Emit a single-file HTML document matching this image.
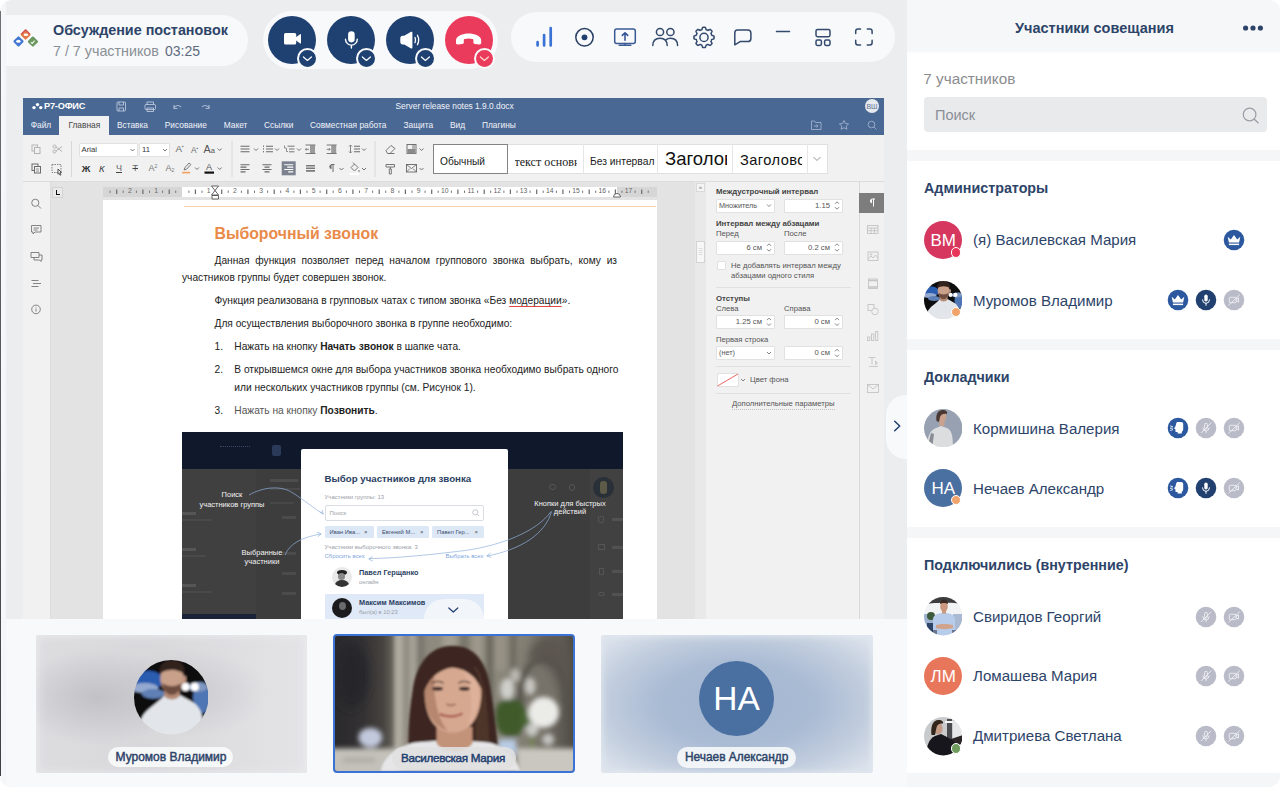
<!DOCTYPE html>
<html lang="ru">
<head>
<meta charset="utf-8">
<title>Обсуждение постановок</title>
<style>
*{box-sizing:border-box;margin:0;padding:0}
html,body{width:1280px;height:787px;overflow:hidden;background:#fff}
body{font-family:"Liberation Sans",sans-serif;color:#2d4469;position:relative}
#app{position:absolute;left:0;top:0;width:1280px;height:787px;background:#ebedef;border-radius:12px;overflow:hidden}
.abs{position:absolute}
.t{position:absolute;white-space:nowrap;line-height:1}
/* top pills */
.pill{position:absolute;background:#f8f9fa}
#p1{left:0;top:15px;width:248px;height:51px;border-radius:0 26px 26px 0}
#p2{left:263px;top:11px;width:235px;height:58px;border-radius:29px}
#p3{left:511px;top:12px;width:384px;height:50px;border-radius:25px}
.cb{position:absolute;width:48px;height:48px;border-radius:50%;background:#1f4172;top:16px}
.cbs{position:absolute;width:21px;height:21px;border-radius:50%;background:#1f4172;border:2px solid #f8f9fa;top:48px}
.red{background:#ea3b5c}
/* right panel */
#rp{left:907px;top:0;width:373px;height:787px;background:#f5f6f7}
#rph{left:0;top:0;width:374px;height:54px;background:linear-gradient(#f6f7f8 0,#f6f7f8 51px,#fff 54px)}
.sec{position:absolute;left:0;width:374px;background:#fff}
.sh{font-weight:bold;font-size:14.3px;color:#2d4469;left:17px}
.nm{font-size:15.1px;color:#2d4469;left:66px}
.av{position:absolute;left:17px;width:38px;height:38px;border-radius:50%;overflow:hidden}
.ic{position:absolute;width:22px;height:22px;border-radius:50%}
</style>
</head>
<body>
<div id="app">

<!-- TOPBAR -->
<div class="pill" id="p1"></div>
<div class="t" style="left:53px;top:23px;font-size:14.35px;font-weight:bold;color:#2d4469">Обсуждение постановок</div>
<div class="t" style="left:53px;top:44px;font-size:14.3px;color:#8a8f96">7 / 7 участников</div>
<div class="t" style="left:165px;top:44px;font-size:14px;color:#5d6b80">03:25</div>

<div class="pill" id="p2"></div>
<div class="cb" style="left:268px"></div><div class="cbs" style="left:297px"></div>
<div class="cb" style="left:327px"></div><div class="cbs" style="left:356px"></div>
<div class="cb" style="left:386px"></div><div class="cbs" style="left:415px"></div>
<div class="cb red" style="left:445px"></div><div class="cbs red" style="left:474px"></div>

<div class="pill" id="p3"></div>
<svg class="abs" style="left:0;top:0" width="907" height="80" viewBox="0 0 907 80" fill="none">
 <!-- logo -->
 <g>
  <rect x="-3.900" y="-3.900" width="7.800" height="7.800" rx="1.100" transform="translate(25.600 34.500) rotate(45)" fill="#e27a44"/>
  <path d="M25.600 29l4.600 4.600-1 1-3.600-3.600-3.600 3.600-1-1z" fill="#cf4a5a" opacity=".75"/>
  <rect x="-3.900" y="-3.900" width="7.800" height="7.800" rx="1.100" transform="translate(18.500 41.400) rotate(45)" fill="#4278d2"/>
  <rect x="-3.900" y="-3.900" width="7.800" height="7.800" rx="1.100" transform="translate(32.900 41.600) rotate(45)" fill="#6b9860"/>
  <ellipse cx="25.900" cy="34.700" rx="2.300" ry="1.300" fill="#fff"/>
  <ellipse cx="18.400" cy="41.300" rx="2.200" ry="1.500" fill="#fff"/>
  <path d="M31 42.200l1.300 1.200 2.300-2.800" stroke="#eef3ea" stroke-width="1.200" fill="none"/>
 </g>
 <!-- camera -->
 <rect x="284" y="33" width="12.2" height="11.6" rx="1.6" fill="#fff"/>
 <path d="M295.5 37.6l4.6-3.4c.5-.3.9 0 .9.500v8.200c0 .5-.4.800-.9.500l-4.600-3.400z" fill="#fff"/>
 <!-- mic -->
 <rect x="348.100" y="31.200" width="6.600" height="11.200" rx="3.300" fill="#fff"/>
 <path d="M345.500 39.200a5.900 5.900 0 0 0 11.800 0M351.400 45.100v3" stroke="#fff" stroke-width="1.400" stroke-linecap="round"/>
 <!-- speaker -->
 <path d="M400.300 38.200c0-1.500 1-2.400 2.300-2.400h1.600l6.900-4c.8-.4 1.300 0 1.300.800v15c0 .8-.5 1.200-1.300.800l-6.900-4h-1.600c-1.300 0-2.300-.9-2.300-2.400z" fill="#fff"/>
 <path d="M415 37.500c.7 1.600.7 3.600 0 5.200M417.400 35.300c1.600 3 1.600 6.500 0 9.500" stroke="#fff" stroke-width="1.300" stroke-linecap="round"/>
 <!-- hangup -->
 <path d="M456 40.200c0-1.700 1.500-3.600 4.200-4.900 2.500-1.200 5.400-1.800 8.400-1.800s5.900.6 8.400 1.800c2.700 1.300 4.200 3.200 4.200 4.900v2.600c0 1.200-.7 1.800-1.800 1.700l-4.500-.5c-1-.1-1.500-.7-1.500-1.700v-2.100c0-.6-.3-1-.9-1.100-1.200-.3-2.500-.5-3.900-.5s-2.700.2-3.900.5c-.6.100-.9.500-.9 1.100v2.100c0 1-.5 1.600-1.500 1.700l-4.500.5c-1.100.1-1.800-.5-1.800-1.700z" fill="#fff"/>
 <!-- chevrons -->
 <g stroke="#fff" stroke-width="1.200" stroke-linecap="round" stroke-linejoin="round">
  <path d="M303.400 57l4 3.500 4-3.500"/><path d="M362.400 57l4 3.500 4-3.500"/><path d="M421.400 57l4 3.500 4-3.500"/><path d="M480.400 57l4 3.500 4-3.500" stroke="#ffd9c9"/>
 </g>
 <!-- signal -->
 <g stroke="#3b72d6" stroke-width="2.700" stroke-linecap="round">
  <path d="M537.600 42.200v3.200M544.100 35.200v10.200M550.700 28.200v17.200"/>
 </g>
 <!-- record -->
 <circle cx="584.500" cy="37.300" r="8.700" stroke="#2a3f66" stroke-width="1.500"/>
 <circle cx="584.500" cy="37.300" r="2.900" fill="#21406f"/>
 <!-- screen share -->
 <rect x="614.700" y="29" width="20.600" height="14.400" rx="2" stroke="#3a5a96" stroke-width="1.500"/>
 <path d="M619.200 45.300h11.600M625 43.400v1.900" stroke="#3a5a96" stroke-width="1.400" stroke-linecap="round"/>
 <path d="M625 40.200v-7.200M622.300 35.400l2.700-2.700 2.700 2.700" stroke="#2d4f94" stroke-width="1.500" stroke-linecap="round" stroke-linejoin="round"/>
 <!-- people -->
 <g stroke="#33496e" stroke-width="1.500" stroke-linecap="round">
  <circle cx="660" cy="32" r="3.600"/><circle cx="670.400" cy="32" r="3.600"/>
  <path d="M652.800 45.600c0-4.800 3-7.400 7.200-7.400s7.200 2.600 7.200 7.400"/>
  <path d="M666.200 39.600c1.100-.9 2.600-1.400 4.200-1.400 4.200 0 7.200 2.600 7.200 7.400"/>
 </g>
 <!-- gear -->
 <g stroke="#33496e" stroke-width="1.500" stroke-linejoin="round">
  <circle cx="704" cy="37.400" r="4.100"/>
  <path d="M704.00 27.30 L704.26 27.30 L704.53 27.31 L704.79 27.33 L705.06 27.36 L705.32 27.39 L705.52 27.82 L705.69 28.29 L705.84 28.76 L705.96 29.23 L706.07 29.67 L706.27 29.73 L706.47 29.79 L706.67 29.86 L706.87 29.93 L707.06 30.01 L707.25 30.09 L707.44 30.18 L707.63 30.27 L707.82 30.37 L708.00 30.47 L708.39 30.24 L708.81 29.99 L709.25 29.76 L709.70 29.55 L710.15 29.39 L710.36 29.55 L710.56 29.72 L710.76 29.89 L710.95 30.07 L711.14 30.26 L711.33 30.45 L711.51 30.64 L711.68 30.84 L711.85 31.04 L712.01 31.25 L711.85 31.70 L711.64 32.15 L711.41 32.59 L711.16 33.01 L710.93 33.40 L711.03 33.58 L711.13 33.77 L711.22 33.96 L711.31 34.15 L711.39 34.34 L711.47 34.53 L711.54 34.73 L711.61 34.93 L711.67 35.13 L711.73 35.33 L712.17 35.44 L712.64 35.56 L713.11 35.71 L713.58 35.88 L714.01 36.08 L714.04 36.34 L714.07 36.61 L714.09 36.87 L714.10 37.14 L714.10 37.40 L714.10 37.66 L714.09 37.93 L714.07 38.19 L714.04 38.46 L714.01 38.72 L713.58 38.92 L713.11 39.09 L712.64 39.24 L712.17 39.36 L711.73 39.47 L711.67 39.67 L711.61 39.87 L711.54 40.07 L711.47 40.27 L711.39 40.46 L711.31 40.65 L711.22 40.84 L711.13 41.03 L711.03 41.22 L710.93 41.40 L711.16 41.79 L711.41 42.21 L711.64 42.65 L711.85 43.10 L712.01 43.55 L711.85 43.76 L711.68 43.96 L711.51 44.16 L711.33 44.35 L711.14 44.54 L710.95 44.73 L710.76 44.91 L710.56 45.08 L710.36 45.25 L710.15 45.41 L709.70 45.25 L709.25 45.04 L708.81 44.81 L708.39 44.56 L708.00 44.33 L707.82 44.43 L707.63 44.53 L707.44 44.62 L707.25 44.71 L707.06 44.79 L706.87 44.87 L706.67 44.94 L706.47 45.01 L706.27 45.07 L706.07 45.13 L705.96 45.57 L705.84 46.04 L705.69 46.51 L705.52 46.98 L705.32 47.41 L705.06 47.44 L704.79 47.47 L704.53 47.49 L704.26 47.50 L704.00 47.50 L703.74 47.50 L703.47 47.49 L703.21 47.47 L702.94 47.44 L702.68 47.41 L702.48 46.98 L702.31 46.51 L702.16 46.04 L702.04 45.57 L701.93 45.13 L701.73 45.07 L701.53 45.01 L701.33 44.94 L701.13 44.87 L700.94 44.79 L700.75 44.71 L700.56 44.62 L700.37 44.53 L700.18 44.43 L700.00 44.33 L699.61 44.56 L699.19 44.81 L698.75 45.04 L698.30 45.25 L697.85 45.41 L697.64 45.25 L697.44 45.08 L697.24 44.91 L697.05 44.73 L696.86 44.54 L696.67 44.35 L696.49 44.16 L696.32 43.96 L696.15 43.76 L695.99 43.55 L696.15 43.10 L696.36 42.65 L696.59 42.21 L696.84 41.79 L697.07 41.40 L696.97 41.22 L696.87 41.03 L696.78 40.84 L696.69 40.65 L696.61 40.46 L696.53 40.27 L696.46 40.07 L696.39 39.87 L696.33 39.67 L696.27 39.47 L695.83 39.36 L695.36 39.24 L694.89 39.09 L694.42 38.92 L693.99 38.72 L693.96 38.46 L693.93 38.19 L693.91 37.93 L693.90 37.66 L693.90 37.40 L693.90 37.14 L693.91 36.87 L693.93 36.61 L693.96 36.34 L693.99 36.08 L694.42 35.88 L694.89 35.71 L695.36 35.56 L695.83 35.44 L696.27 35.33 L696.33 35.13 L696.39 34.93 L696.46 34.73 L696.53 34.53 L696.61 34.34 L696.69 34.15 L696.78 33.96 L696.87 33.77 L696.97 33.58 L697.07 33.40 L696.84 33.01 L696.59 32.59 L696.36 32.15 L696.15 31.70 L695.99 31.25 L696.15 31.04 L696.32 30.84 L696.49 30.64 L696.67 30.45 L696.86 30.26 L697.05 30.07 L697.24 29.89 L697.44 29.72 L697.64 29.55 L697.85 29.39 L698.30 29.55 L698.75 29.76 L699.19 29.99 L699.61 30.24 L700.00 30.47 L700.18 30.37 L700.37 30.27 L700.56 30.18 L700.75 30.09 L700.94 30.01 L701.13 29.93 L701.33 29.86 L701.53 29.79 L701.73 29.73 L701.93 29.67 L702.04 29.23 L702.16 28.76 L702.31 28.29 L702.48 27.82 L702.68 27.39 L702.94 27.36 L703.21 27.33 L703.47 27.31 L703.74 27.30Z"/>
 </g>
 <!-- chat -->
 <path d="M737.300 29.900h10.400c2 0 3.200 1.200 3.200 3.200v5.300c0 2-1.200 3.200-3.200 3.200h-7.600l-5.300 3.200v-11.700c0-2 1-3.200 2.500-3.200z" stroke="#33496e" stroke-width="1.500" stroke-linejoin="round"/>
 <!-- minus -->
 <path d="M776.500 31.600h13" stroke="#33496e" stroke-width="1.500" stroke-linecap="round"/>
 <!-- grid -->
 <g stroke="#33496e" stroke-width="1.500">
  <rect x="816" y="29.400" width="14" height="7.300" rx="1.600"/>
  <rect x="816" y="40.100" width="5.400" height="5.400" rx="1.400"/>
  <rect x="824.600" y="40.100" width="5.400" height="5.400" rx="1.400"/>
 </g>
 <!-- fullscreen -->
 <path d="M855.700 33.600v-2.400c0-1.400.8-2.200 2.200-2.200h2.600M867.300 29h2.600c1.400 0 2.200.8 2.200 2.200v2.400M872.100 40.300v2.400c0 1.400-.8 2.200-2.200 2.200h-2.600M860.500 44.900h-2.600c-1.400 0-2.200-.8-2.200-2.200v-2.400" stroke="#33496e" stroke-width="1.500" stroke-linecap="round"/>
</svg>

<!-- DOC -->
<div class="abs" id="doc" style="left:23px;top:98px;width:861px;height:524px;background:#e4e4e4;overflow:hidden">
<div class="abs" id="din" style="left:-23px;top:-98px;width:1280px;height:787px">
<style>
#din .t{color:#444}
.hdr{position:absolute;left:23px;top:98px;width:861px;height:37px;background:#4a6894}
.mt{position:absolute;white-space:nowrap;line-height:1;font-size:8.35px;color:#f1f4f9;top:121px}
.tb{position:absolute;left:23px;top:135px;width:861px;height:47px;background:#f1f1f1;border-bottom:1px solid #dcdcdc}
.wb{position:absolute;background:#fff;border:1px solid #e1e1e1;border-radius:1px}
.sp{position:absolute;margin-top:.2px;font-size:7.7px;color:#555;white-space:nowrap;line-height:1}
.spb{position:absolute;margin-top:.2px;font-size:7.8px;color:#444;font-weight:bold;white-space:nowrap;line-height:1}
.bt{position:absolute;left:181px;font-size:10.2px;line-height:1;color:#222;white-space:nowrap}
</style>
<div class="hdr"></div>
<div class="abs" style="left:59px;top:116px;width:49.500px;height:20px;background:#f1f1f1"></div>
<div class="t" style="left:44px;top:102px;font-size:9.2px;font-weight:bold;letter-spacing:-.2px"><span style="color:#fff">Р7-ОФИС</span></div>
<div class="mt" style="left:395.500px;top:102px;font-size:8.4px">Server release notes 1.9.0.docx</div>
<div class="mt" style="left:30.700px">Файл</div>
<div class="mt" style="left:68.400px;color:#444">Главная</div>
<div class="mt" style="left:117px">Вставка</div>
<div class="mt" style="left:164.800px">Рисование</div>
<div class="mt" style="left:223.800px">Макет</div>
<div class="mt" style="left:264px">Ссылки</div>
<div class="mt" style="left:310px">Совместная работа</div>
<div class="mt" style="left:403.500px">Защита</div>
<div class="mt" style="left:450px">Вид</div>
<div class="mt" style="left:482px">Плагины</div>
<div class="abs" style="left:865px;top:99px;width:14px;height:14px;border-radius:50%;background:#e6e9ee"></div>
<div class="t" style="left:865px;width:14px;text-align:center;top:102.800px;font-size:7px;color:#4a6894!important"><span style="color:#5f7494">ВШ</span></div>
<div class="tb"></div>
<!-- font boxes -->
<div class="wb" style="left:79px;top:142.500px;width:58.500px;height:14px"></div>
<div class="wb" style="left:139px;top:142.500px;width:31px;height:14px"></div>
<div class="sp" style="left:81.500px;top:145.500px;color:#333">Arial</div>
<div class="sp" style="left:142px;top:145.500px;color:#333">11</div>
<!-- styles gallery -->
<div class="abs" style="left:433px;top:144px;width:394.500px;height:29.500px;background:#fff;border:1px solid #e0e0e0"></div>
<div class="abs" style="left:433px;top:144px;width:74.500px;height:29.500px;border:1px solid #848484"></div>
<div class="abs" style="left:582.500px;top:144px;width:1px;height:29.500px;background:#e6e6e6"></div>
<div class="abs" style="left:657px;top:144px;width:1px;height:29.500px;background:#e6e6e6"></div>
<div class="abs" style="left:732px;top:144px;width:1px;height:29.500px;background:#e6e6e6"></div>
<div class="abs" style="left:807px;top:144px;width:1px;height:29.500px;background:#e6e6e6"></div>
<div class="t" style="left:440px;top:157.400px;font-size:10.200px"><span style="color:#1a1a1a">Обычный</span></div>
<div class="t" style="left:514.500px;top:156.300px;font-size:12px;font-family:'Liberation Serif',serif;width:62.500px;overflow:hidden"><span style="color:#1a1a1a">текст основн</span></div>
<div class="t" style="left:590px;top:157.400px;font-size:10.300px;width:66px;overflow:hidden"><span style="color:#1a1a1a">Без интервал</span></div>
<div class="t" style="left:665px;top:150.200px;font-size:18.500px;width:62px;overflow:hidden"><span style="color:#111">Заголов</span></div>
<div class="t" style="left:740px;top:153px;font-size:14.600px;letter-spacing:.45px;width:62px;overflow:hidden"><span style="color:#111">Заголово</span></div>
<!-- toolbar letters -->
<div class="t" style="left:175.500px;top:144.200px;font-size:9.800px;color:#6a6a6a">A<span style="font-size:5px;vertical-align:top;position:relative;top:0">▪</span></div>
<div class="t" style="left:191px;top:145.500px;font-size:8.300px;color:#6a6a6a">A<span style="font-size:5px;vertical-align:top">▪</span></div>
<div class="t" style="left:203.500px;top:143.600px;font-size:10.800px;color:#555">A<span style="font-size:7.500px">a</span></div>
<div class="t" style="left:81.800px;top:163.800px;font-size:9.500px;font-weight:bold"><span style="color:#333">Ж</span></div>
<div class="t" style="left:99px;top:163.800px;font-size:9.500px;font-style:italic"><span style="color:#333">К</span></div>
<div class="t" style="left:116px;top:164px;font-size:9px;text-decoration:underline"><span style="color:#666">Ч</span></div>
<div class="t" style="left:132.500px;top:164px;font-size:9px;text-decoration:line-through"><span style="color:#666">Т</span></div>
<div class="t" style="left:148.500px;top:163.500px;font-size:9px;color:#777">A<span style="font-size:5px;vertical-align:top">2</span></div>
<div class="t" style="left:165.500px;top:163.500px;font-size:9px;color:#777">A<span style="font-size:5px;vertical-align:bottom">2</span></div>
<div class="t" style="left:206px;top:162.500px;font-size:9px;color:#555">A</div>
<!-- editor -->
<div class="abs" style="left:23px;top:182px;width:861px;height:440px;background:#e3e3e3"></div>
<div class="abs" style="left:23px;top:182px;width:27.500px;height:440px;background:#f1f1f1;border-right:1px solid #dcdcdc"></div>
<div class="abs" style="left:52px;top:187.200px;width:10.500px;height:10.400px;background:#eaeaea;border:1px solid #d2d2d2"></div>
<div class="abs" style="left:55.600px;top:190.200px;width:4.600px;height:4.800px;border-left:1.800px solid #111;border-bottom:1.800px solid #111"></div>
<!-- ruler -->
<div class="abs" style="left:102.500px;top:186.800px;width:554px;height:10px;background:#d6d6d6"></div>
<div class="abs" style="left:182px;top:186.800px;width:435px;height:10px;background:#fff"></div>
<div class="abs" id="rul" style="left:0;top:0"><div class="t" style="left:123.8px;width:12px;text-align:center;top:188.300px;font-size:6.800px"><span style="color:#666">2</span></div>
<div class="t" style="left:150.1px;width:12px;text-align:center;top:188.300px;font-size:6.800px"><span style="color:#666">1</span></div>
<div class="t" style="left:202.6px;width:12px;text-align:center;top:188.300px;font-size:6.800px"><span style="color:#666">1</span></div>
<div class="t" style="left:228.8px;width:12px;text-align:center;top:188.300px;font-size:6.800px"><span style="color:#666">2</span></div>
<div class="t" style="left:255.1px;width:12px;text-align:center;top:188.300px;font-size:6.800px"><span style="color:#666">3</span></div>
<div class="t" style="left:281.3px;width:12px;text-align:center;top:188.300px;font-size:6.800px"><span style="color:#666">4</span></div>
<div class="t" style="left:307.6px;width:12px;text-align:center;top:188.300px;font-size:6.800px"><span style="color:#666">5</span></div>
<div class="t" style="left:333.8px;width:12px;text-align:center;top:188.300px;font-size:6.800px"><span style="color:#666">6</span></div>
<div class="t" style="left:360.1px;width:12px;text-align:center;top:188.300px;font-size:6.800px"><span style="color:#666">7</span></div>
<div class="t" style="left:386.3px;width:12px;text-align:center;top:188.300px;font-size:6.800px"><span style="color:#666">8</span></div>
<div class="t" style="left:412.6px;width:12px;text-align:center;top:188.300px;font-size:6.800px"><span style="color:#666">9</span></div>
<div class="t" style="left:438.8px;width:12px;text-align:center;top:188.300px;font-size:6.800px"><span style="color:#666">10</span></div>
<div class="t" style="left:465.1px;width:12px;text-align:center;top:188.300px;font-size:6.800px"><span style="color:#666">11</span></div>
<div class="t" style="left:491.3px;width:12px;text-align:center;top:188.300px;font-size:6.800px"><span style="color:#666">12</span></div>
<div class="t" style="left:517.5px;width:12px;text-align:center;top:188.300px;font-size:6.800px"><span style="color:#666">13</span></div>
<div class="t" style="left:543.8px;width:12px;text-align:center;top:188.300px;font-size:6.800px"><span style="color:#666">14</span></div>
<div class="t" style="left:570.0px;width:12px;text-align:center;top:188.300px;font-size:6.800px"><span style="color:#666">15</span></div>
<div class="t" style="left:596.3px;width:12px;text-align:center;top:188.300px;font-size:6.800px"><span style="color:#666">16</span></div>
<div class="t" style="left:622.5px;width:12px;text-align:center;top:188.300px;font-size:6.800px"><span style="color:#666">17</span></div></div>
<!-- page -->
<div class="abs" style="left:102.500px;top:200.300px;width:554px;height:430px;background:#fff"></div>
<div class="abs" style="left:184px;top:205.500px;width:472px;height:1px;background:#f3cfae"></div>
<div class="t" style="left:214.500px;top:225.800px;font-size:15.8px;font-weight:bold"><span style="color:#e98a49">Выборочный звонок</span></div>
<div class="bt" style="top:255.600px;width:436px;text-align:justify;text-align-last:justify;white-space:normal;padding-left:33.500px">Данная функция позволяет перед началом группового звонка выбрать, кому из</div>
<div class="bt" style="top:273px;left:182px">участников группы будет совершен звонок.</div>
<div class="bt" style="top:296px;left:214.500px">Функция реализована в групповых чатах с типом звонка «Без <span style="text-decoration:underline solid #e0433c .8px;text-underline-offset:1.6px">модерации</span>».</div>
<div class="bt" style="top:319px;left:214.500px">Для осуществления выборочного звонка в группе необходимо:</div>
<div class="bt" style="top:342px;left:214.500px">1.</div>
<div class="bt" style="top:342px;left:234.300px">Нажать на кнопку <b>Начать звонок</b> в шапке чата.</div>
<div class="bt" style="top:365px;left:214.500px">2.</div>
<div class="bt" style="top:365px;left:234.300px">В открывшемся окне для выбора участников звонка необходимо выбрать одного</div>
<div class="bt" style="top:382.600px;left:234.300px">или нескольких участников группы (см. Рисунок 1).</div>
<div class="bt" style="top:405.600px;left:214.500px">3.</div>
<div class="bt" style="top:405.600px;left:234.300px"><span style="color:#555">Нажать на кнопку</span> <b>Позвонить</b>.</div>
<!-- scrollbar -->
<div class="abs" style="left:694.500px;top:182px;width:11.500px;height:440px;background:#e9e9e9"></div>
<div class="abs" style="left:695.500px;top:241px;width:9.500px;height:22px;background:#f7f7f7;border:1px solid #d4d4d4"></div>
<div class="abs" style="left:695.500px;top:183px;width:9.500px;height:9px;background:#f4f4f4;border:1px solid #dadada"></div>
<!-- settings panel -->
<div class="abs" style="left:706px;top:182px;width:153px;height:440px;background:#f1f1f1"></div>
<div class="abs" style="left:858.500px;top:182px;width:25.500px;height:440px;background:#f1f1f1;border-left:1px solid #d8d8d8"></div>
<div class="abs" style="left:859px;top:192.500px;width:25px;height:20.500px;background:#7d7d7d"></div>
<div class="spb" style="left:716px;top:188px">Междустрочный интервал</div>
<div class="wb" style="left:716px;top:198.500px;width:58.500px;height:14px"></div><div class="sp" style="left:719px;top:201.500px;font-size:7.300px">Множитель</div>
<div class="wb" style="left:784px;top:198.500px;width:58.500px;height:14px"></div><div class="sp" style="left:784px;width:46px;text-align:right;top:201.500px">1.15</div>
<div class="spb" style="left:716px;top:219.500px">Интервал между абзацами</div>
<div class="sp" style="left:716px;top:230px">Перед</div><div class="sp" style="left:784px;top:230px">После</div>
<div class="wb" style="left:716px;top:240.500px;width:58.500px;height:14px"></div><div class="sp" style="left:716px;width:46px;text-align:right;top:243.500px">6 см</div>
<div class="wb" style="left:784px;top:240.500px;width:58.500px;height:14px"></div><div class="sp" style="left:784px;width:46px;text-align:right;top:243.500px">0.2 см</div>
<div class="wb" style="left:716.500px;top:260.800px;width:9.500px;height:9.500px"></div>
<div class="sp" style="left:731px;top:262px">Не добавлять интервал между</div>
<div class="sp" style="left:731px;top:272px">абзацами одного стиля</div>
<div class="abs" style="left:716px;top:287px;width:135px;height:1px;background:#e0e0e0"></div>
<div class="spb" style="left:716px;top:294.500px">Отступы</div>
<div class="sp" style="left:716px;top:304.500px">Слева</div><div class="sp" style="left:784px;top:304.500px">Справа</div>
<div class="wb" style="left:716px;top:314.800px;width:58.500px;height:14px"></div><div class="sp" style="left:716px;width:46px;text-align:right;top:317.800px">1.25 см</div>
<div class="wb" style="left:784px;top:314.800px;width:58.500px;height:14px"></div><div class="sp" style="left:784px;width:46px;text-align:right;top:317.800px">0 см</div>
<div class="sp" style="left:716px;top:336px">Первая строка</div>
<div class="wb" style="left:716px;top:346px;width:58.500px;height:14px"></div><div class="sp" style="left:719px;top:349px;font-size:7.300px">(нет)</div>
<div class="wb" style="left:784px;top:346px;width:58.500px;height:14px"></div><div class="sp" style="left:784px;width:46px;text-align:right;top:349px">0 см</div>
<div class="abs" style="left:716px;top:366px;width:135px;height:1px;background:#e0e0e0"></div>
<div class="wb" style="left:716.500px;top:373px;width:22.500px;height:14px"></div>
<div class="sp" style="left:750px;top:375.800px">Цвет фона</div>
<div class="abs" style="left:716px;top:393px;width:135px;height:1px;background:#e0e0e0"></div>
<div class="sp" style="left:732px;top:399.700px;border-bottom:1px dotted #c2c2c2;padding-bottom:1px">Дополнительные параметры</div>
<!-- embedded screenshot -->
<div class="abs" style="left:181.500px;top:431.500px;width:441.500px;height:192px;background:#3d3d3e;overflow:hidden">
 <div class="abs" style="left:0;top:0;width:442px;height:37.500px;background:#10192c"></div>
 <div class="abs" style="left:0;top:37.500px;width:74px;height:160px;background:#404040"></div><div class="abs" style="left:0;top:182px;width:74px;height:12px;background:#1a2438"></div>
 
 
 <div class="abs" style="left:38px;top:14px;width:30px;height:1px;border-top:1px dotted #3a4a66"></div>
 <div class="abs" style="left:90px;top:13px;width:9px;height:11px;background:#2a3a58;border-radius:2px"></div>
 <div class="abs" style="left:88px;top:47px;width:28px;height:3px;background:#4e4e4e"></div>
 <div class="abs" style="left:0;top:80px;width:14px;height:3px;background:#565656"></div><div class="abs" style="left:0;top:87px;width:30px;height:2px;background:#4a4a4a"></div>
 <div class="abs" style="left:0;top:116px;width:14px;height:3px;background:#565656"></div><div class="abs" style="left:0;top:123px;width:24px;height:2px;background:#4a4a4a"></div>
 <div class="abs" style="left:0;top:152px;width:14px;height:3px;background:#565656"></div><div class="abs" style="left:0;top:159px;width:30px;height:2px;background:#4a4a4a"></div><div class="abs" style="left:88px;top:56px;width:30px;height:2px;background:#484848"></div><div class="abs" style="left:88px;top:70px;width:24px;height:2px;background:#484848"></div><div class="abs" style="left:100px;top:84px;width:14px;height:3px;background:#4b4b4b"></div><div class="abs" style="left:100px;top:120px;width:14px;height:3px;background:#4b4b4b"></div><div class="abs" style="left:100px;top:140px;width:14px;height:3px;background:#4b4b4b"></div><div class="abs" style="left:100px;top:160px;width:14px;height:3px;background:#4b4b4b"></div><div class="abs" style="left:408px;top:37.500px;width:34px;height:160px;background:#414141"></div><div class="abs" style="left:416px;top:84px;width:6px;height:7px;border-radius:2px;border:1px solid #555"></div><div class="abs" style="left:430px;top:86px;width:12px;height:3px;background:#525252"></div><div class="abs" style="left:416px;top:112px;width:7px;height:6px;border:1px solid #555"></div><div class="abs" style="left:430px;top:114px;width:12px;height:3px;background:#525252"></div><div class="abs" style="left:417px;top:136px;width:5px;height:7px;border:1px solid #555"></div><div class="abs" style="left:430px;top:138px;width:12px;height:3px;background:#525252"></div><div class="abs" style="left:416px;top:160px;width:7px;height:4px;border-radius:2px;border:1px solid #555"></div><div class="abs" style="left:430px;top:161px;width:12px;height:3px;background:#525252"></div><div class="abs" style="left:367px;top:52px;width:7px;height:6px;border-radius:3px;border:1px solid #565656"></div><div class="abs" style="left:387px;top:52px;width:6px;height:7px;border-radius:3px;border:1px solid #565656"></div>
 <div class="abs" style="left:411px;top:45px;width:21px;height:21px;border-radius:50%;background:#2a3038"></div>
 <div class="abs" style="left:418px;top:49px;width:7px;height:13px;border-radius:3px;background:#5d5a48"></div>
</div>
<div class="abs" style="left:301px;top:448.500px;width:206.500px;height:175px;background:#fff;border-radius:2px 2px 0 0"></div>
<div class="t" style="left:324.500px;top:474px;font-size:9.700px;font-weight:bold"><span style="color:#2b3f63">Выбор участников для звонка</span></div>
<div class="t" style="left:324.500px;top:494px;font-size:6px"><span style="color:#9aa0a8">Участники группы: 13</span></div>
<div class="abs" style="left:324.500px;top:505.300px;width:159.500px;height:15.500px;border:1px solid #dadde2;border-radius:2px;background:#fff"></div>
<div class="t" style="left:329.500px;top:510px;font-size:6px"><span style="color:#a0a4aa">Поиск</span></div>
<div class="abs" style="left:324.500px;top:526.400px;width:49.500px;height:11.400px;background:#dde8f7;border-radius:1.5px"></div>
<div class="abs" style="left:377.300px;top:526.400px;width:51.700px;height:11.400px;background:#dde8f7;border-radius:1.5px"></div>
<div class="abs" style="left:432px;top:526.400px;width:51.800px;height:11.400px;background:#dde8f7;border-radius:1.5px"></div>
<div class="t" style="left:329.500px;top:529.800px;font-size:5.800px"><span style="color:#3a4c6e">Иван Ива...</span></div><div class="t" style="left:364px;top:529px;font-size:6px"><span style="color:#555">×</span></div>
<div class="t" style="left:382px;top:529.800px;font-size:5.800px"><span style="color:#3a4c6e">Евгений М...</span></div><div class="t" style="left:420px;top:529px;font-size:6px"><span style="color:#555">×</span></div>
<div class="t" style="left:437px;top:529.800px;font-size:5.800px"><span style="color:#3a4c6e">Павел Гер...</span></div><div class="t" style="left:474.500px;top:529px;font-size:6px"><span style="color:#555">×</span></div>
<div class="t" style="left:324.500px;top:543.800px;font-size:6px"><span style="color:#9aa0a8">Участники выборочного звонка: 3</span></div>
<div class="t" style="left:324.500px;top:553.600px;font-size:5.950px"><span style="color:#7fa6dd">Сбросить всех</span></div>
<div class="t" style="left:445.600px;top:553.600px;font-size:5.950px"><span style="color:#7fa6dd">Выбрать всех</span></div>
<div class="abs" style="left:324.500px;top:594px;width:159.500px;height:30px;background:#dfe9f7"></div>
<div class="abs" style="left:331.500px;top:567.200px;width:20px;height:20px;border-radius:50%;background:#e9e9e9;overflow:hidden"><div class="abs" style="left:5px;top:3px;width:10px;height:5px;border-radius:50%;background:#222"></div><div class="abs" style="left:6.500px;top:6px;width:7px;height:7px;border-radius:50%;background:#888"></div><div class="abs" style="left:3px;top:13px;width:14px;height:10px;border-radius:50% 50% 0 0;background:#333"></div></div>
<div class="abs" style="left:331.500px;top:597.700px;width:20px;height:20px;border-radius:50%;background:#1b1b1d;overflow:hidden"><div class="abs" style="left:7px;top:4px;width:7px;height:8px;border-radius:50%;background:#6a6a6a"></div></div>
<div class="t" style="left:359px;top:568.800px;font-size:7.300px;font-weight:bold"><span style="color:#2b3f63">Павел Герщанко</span></div>
<div class="t" style="left:359px;top:580px;font-size:5.800px"><span style="color:#9aa0a8">онлайн</span></div>
<div class="t" style="left:359px;top:598.900px;font-size:7.300px;font-weight:bold"><span style="color:#2b3f63">Максим Максимов</span></div>
<div class="t" style="left:359px;top:610.300px;font-size:5.800px"><span style="color:#9aa0a8">был(а) в 10:23</span></div>
<div class="abs" style="left:424px;top:598.500px;width:60px;height:40px;border-radius:20px;background:#f2f5fa"></div>
<!-- annotations -->
<div class="t" style="left:192px;width:80px;text-align:center;top:490.300px;font-size:7.500px;line-height:9.400px"><span style="color:#f2f2f2">Поиск<br>участников группы</span></div>
<div class="t" style="left:232px;width:60px;text-align:center;top:548px;font-size:7.500px;line-height:9.400px"><span style="color:#f2f2f2">Выбранные<br>участники</span></div>
<div class="t" style="left:525px;width:90px;text-align:center;top:499.800px;font-size:7.500px;line-height:8.500px"><span style="color:#f2f2f2">Кнопки для быстрых<br>действий</span></div>
<svg class="abs" style="left:0;top:0" width="907" height="640" viewBox="0 0 907 640" fill="none">
<g fill="#fff"><circle cx="34" cy="107.600" r="1.700"/><circle cx="37.500" cy="104.600" r="1.700"/><circle cx="40.800" cy="107.600" r="1.700"/></g>
<g stroke="#c9d3e4" stroke-width=".8"><rect x="117" y="102" width="8.500" height="9" rx="1"/><path d="M119 102v3h4.500v-3M119 111v-3h4.500v3"/><rect x="145" y="104.500" width="10.500" height="5" rx="1"/><path d="M147 104.500v-2.500h6.500v2.500M147 108h6.500v3.500h-6.500z"/></g>
<g stroke="#a9b8d0" stroke-width="1.100"><path d="M174 108.500c.5-3 4.500-4 7-1.500M174 105v3.500h3.500"/><path d="M209 108.500c-.5-3-4.500-4-7-1.500M209 105v3.500h-3.500"/></g>
<g stroke="#a9b9d2" stroke-width=".8"><path d="M811.500 121h3l1 1.500h5.500v7h-9.500z"/><path d="M814 126h4M816.500 124.500l1.500 1.500-1.500 1.500"/><path d="M844 120.500l1.400 3 3.200.4-2.400 2.200.7 3.200-2.900-1.600-2.900 1.600.7-3.200-2.400-2.200 3.200-.4z"/><circle cx="871.500" cy="124.500" r="3.300"/><path d="M874 127l2.500 2.500"/></g>
<path d="M71.5 141v36" stroke="#d8d8d8" stroke-width="1"/>
<path d="M232 141v36" stroke="#d8d8d8" stroke-width="1"/>
<path d="M375 141v36" stroke="#d8d8d8" stroke-width="1"/>
<g stroke="#b3b3b3" stroke-width="1"><rect x="32" y="145" width="5.500" height="6"/><rect x="34.500" y="147.500" width="5.500" height="6" fill="#f1f1f1"/><circle cx="54.500" cy="146.500" r="1.500"/><circle cx="54.500" cy="151.500" r="1.500"/><path d="M56 147l6 4.500M56 151l6-4.500"/></g>
<g stroke="#6a6a6a" stroke-width="1"><rect x="32" y="164" width="6" height="6.500"/><rect x="34.500" y="166.500" width="6" height="6.500" fill="#f1f1f1"/><path d="M36 169h3M36 171h3" stroke-width=".7"/></g>
<g stroke="#777" stroke-width=".9"><rect x="52" y="164.500" width="9" height="8" stroke-dasharray="1.500 1"/><path d="M58 169l3.500 3.500-1.500.2 1 2-1 .5-1-2-1 1z" fill="#f1f1f1" stroke="#444"/></g>
<path d="M130.5 149.0l2 2 2-2" stroke="#666" stroke-width=".9" fill="none"/>
<path d="M163.0 149.0l2 2 2-2" stroke="#666" stroke-width=".9" fill="none"/>
<path d="M240.5 146.2H249.5M240.5 149.0H249.5M240.5 151.8H249.5" stroke="#6a6a6a" stroke-width="1.1"/>
<path d="M254.0 148.5l2 2 2-2" stroke="#666" stroke-width=".9" fill="none"/>
<path d="M266.0 146.2H273.0M266.0 149.0H273.0M266.0 151.8H273.0" stroke="#6a6a6a" stroke-width="1.1"/>
<path d="M263.500 145.500v7.500" stroke="#6a6a6a" stroke-width="1" stroke-dasharray="1.300 1.500"/>
<path d="M275.0 148.5l2 2 2-2" stroke="#666" stroke-width=".9" fill="none"/>
<path d="M287.5 146.2H294.5M289.0 149.0H294.5M289.0 151.8H294.5" stroke="#777" stroke-width="1"/>
<path d="M284.500 145.500v2.500h1.500M286.500 148v3.500h1.500" stroke="#777" stroke-width=".8"/>
<path d="M297.0 148.5l2 2 2-2" stroke="#666" stroke-width=".9" fill="none"/>
<rect x="310.0" y="145.200" width="5" height="8" fill="#9a9a9a"/><path d="M305.5 145h10M305.5 153.500h10" stroke="#6a6a6a" stroke-width=".9"/>
<path d="M309.0 149.300h-3.500M306.7 148l-1.300 1.300 1.300 1.300" stroke="#6a6a6a" stroke-width=".8"/>
<rect x="331.2" y="145.200" width="5" height="8" fill="#9a9a9a"/><path d="M326.7 145h10M326.7 153.500h10" stroke="#6a6a6a" stroke-width=".9"/>
<path d="M326.7 149.300h3.500M328.9 148l1.300 1.300-1.300 1.300" stroke="#6a6a6a" stroke-width=".8"/>
<path d="M354.0 146.2H360.0M354.0 149.0H360.0M354.0 151.8H360.0" stroke="#6a6a6a" stroke-width="1.1"/>
<path d="M350.500 145v8M349 146.500l1.500-1.500 1.500 1.500M349 151.500l1.500 1.500 1.500-1.500" stroke="#6a6a6a" stroke-width=".8"/>
<path d="M362.0 148.5l2 2 2-2" stroke="#666" stroke-width=".9" fill="none"/>
<path d="M386 150.500l5-5 4 3-5 5h-2.500z M388.500 153.500h6" stroke="#6a6a6a" stroke-width=".9"/>
<rect x="407" y="144.500" width="9" height="9" stroke="#666" stroke-width=".9"/><rect x="407.500" y="149" width="8" height="4.500" fill="#8a8a8a"/><rect x="412" y="145" width="3.500" height="4" fill="#b5b5b5"/>
<path d="M419.5 148.5l2 2 2-2" stroke="#666" stroke-width=".9" fill="none"/>
<path d="M240.5 164.7H249.5M240.5 167.1H246.5M240.5 169.5H249.5M240.5 171.9H245.5" stroke="#6a6a6a" stroke-width="1.1"/>
<path d="M262.5 164.7H271.5M264.5 167.1H269.5M262.5 169.5H271.5M264.5 171.9H269.5" stroke="#6a6a6a" stroke-width="1.1"/>
<rect x="281.700" y="161.300" width="14" height="14" fill="#7c8290"/>
<path d="M284.2 164.7H293.2M287.2 167.1H293.2M284.2 169.5H293.2M288.2 171.9H293.2" stroke="#fff" stroke-width="1.1"/>
<path d="M306.0 165.7H315.0M306.0 168.3H315.0M306.0 170.9H315.0" stroke="#7a7a7a" stroke-width="1.6"/>
<path d="M333 164.500v7.500M331 164.500h3.500" stroke="#6a6a6a" stroke-width="1"/><path d="M331.500 164.500a2.200 2.200 0 0 0 0 4.400z" fill="#6a6a6a"/>
<path d="M339.5 168.0l2 2 2-2" stroke="#666" stroke-width=".9" fill="none"/>
<path d="M351 167.500l3.500-3.500 3.500 3.500-3.500 3.500zM353 162.500l1.500 1.500" stroke="#6a6a6a" stroke-width=".9"/><circle cx="359" cy="171" r=".8" fill="#6a6a6a"/><rect x="349.500" y="173" width="9.500" height="2" fill="#fff"/>
<path d="M362.0 168.0l2 2 2-2" stroke="#666" stroke-width=".9" fill="none"/>
<path d="M386 164.500h8.500v2.500h-8.500zM390.300 167v2M389.300 169h2v5h-2z" stroke="#6a6a6a" stroke-width=".9"/>
<rect x="406.500" y="164.500" width="10" height="7.500" stroke="#666" stroke-width=".9"/><path d="M406.500 164.500l5 4 5-4M406.500 172l3.500-3.500M416.500 172l-3.500-3.500" stroke="#666" stroke-width=".8"/>
<path d="M419.5 168.0l2 2 2-2" stroke="#666" stroke-width=".9" fill="none"/>
<path d="M184 170l1-2.500 4-4.500 1.800 1.500-4 4.500z" stroke="#6a6a6a" stroke-width=".9"/><rect x="182" y="171.800" width="8" height="1.600" fill="#f5a05c"/>
<path d="M195.0 167.5l2 2 2-2" stroke="#666" stroke-width=".9" fill="none"/>
<rect x="204.500" y="171.500" width="9.500" height="2.200" fill="#111"/>
<path d="M217.7 167.5l2 2 2-2" stroke="#666" stroke-width=".9" fill="none"/>
<path d="M217.7 148.5l2 2 2-2" stroke="#666" stroke-width=".9" fill="none"/>
<path d="M813.500 157l3.500 3.500 3.500-3.500" stroke="#888" stroke-width=".9"/>
<g stroke="#777" stroke-width=".9"><circle cx="35.300" cy="202.800" r="3.600"/><path d="M38 205.500l3 3"/>
<path d="M31.500 225.500h9.500v6.500h-6l-2 2v-2h-1.500zM33.500 228h5.500M33.500 230h4"/>
<path d="M31 252.500h8v5h-8zM34 257.500v2.500h5.500l1.500 1.500v-1.500h1v-5h-3"/>
<path d="M31.500 280.500h7M33 283.500h8M31.500 286.500h7"/>
<circle cx="36" cy="309.400" r="4.300"/><path d="M36 308.500v3M36 306.800v.6"/></g>
<path d="M116.7 189.400v4.600M142.9 189.400v4.600M169.2 189.400v4.600M195.4 189.400v4.600M221.7 189.400v4.600M247.9 189.400v4.600M274.2 189.400v4.600M300.4 189.400v4.600M326.7 189.400v4.600M352.9 189.400v4.600M379.2 189.400v4.600M405.4 189.400v4.600M431.7 189.400v4.600M457.9 189.400v4.600M484.2 189.400v4.600M510.4 189.400v4.600M536.7 189.400v4.600M562.9 189.400v4.600M589.2 189.400v4.600M615.4 189.400v4.600M641.7 189.400v4.600" stroke="#6a6a6a" stroke-width="1.200"/><path d="M110.1 190.600v2.300M123.2 190.600v2.300M136.4 190.600v2.300M149.5 190.600v2.300M162.6 190.600v2.300M175.7 190.600v2.300M188.9 190.600v2.300M202.0 190.600v2.300M215.1 190.600v2.300M228.2 190.600v2.300M241.4 190.600v2.300M254.5 190.600v2.300M267.6 190.600v2.300M280.7 190.600v2.300M293.9 190.600v2.300M307.0 190.600v2.300M320.1 190.600v2.300M333.2 190.600v2.300M346.4 190.600v2.300M359.5 190.600v2.300M372.6 190.600v2.300M385.7 190.600v2.300M398.9 190.600v2.300M412.0 190.600v2.300M425.1 190.600v2.300M438.2 190.600v2.300M451.4 190.600v2.300M464.5 190.600v2.300M477.6 190.600v2.300M490.7 190.600v2.300M503.9 190.600v2.300M517.0 190.600v2.300M530.1 190.600v2.300M543.2 190.600v2.300M556.4 190.600v2.300M569.5 190.600v2.300M582.6 190.600v2.300M595.7 190.600v2.300M608.9 190.600v2.300M622.0 190.600v2.300M635.1 190.600v2.300M648.2 190.600v2.300" stroke="#777" stroke-width="1"/>
<path d="M211.500 186h7l-3.500 4.500zM211.500 195h7l-3.500-4.500zM212 195.500h6.500v3.500h-6.500z" fill="#fff" stroke="#444" stroke-width=".8"/>
<path d="M613.500 197a3.500 3.500 0 0 1 7 0z" fill="#fff" stroke="#444" stroke-width=".8"/>
<path d="M698.500 188.500l2-2 2 2z" fill="#999"/>
<path d="M698.500 248.500h4M698.500 250.500h4M698.500 252.500h4M698.500 254.500h4" stroke="#ccc" stroke-width=".6"/>
<path d="M835 203.8l2-2 2 2M835 207.2l2 2 2-2" stroke="#666" stroke-width=".8"/>
<path d="M835 245.8l2-2 2 2M835 249.2l2 2 2-2" stroke="#666" stroke-width=".8"/>
<path d="M835 320.1l2-2 2 2M835 323.5l2 2 2-2" stroke="#666" stroke-width=".8"/>
<path d="M835 351.3l2-2 2 2M835 354.7l2 2 2-2" stroke="#666" stroke-width=".8"/>
<path d="M767 245.8l2-2 2 2M767 249.2l2 2 2-2" stroke="#666" stroke-width=".8"/>
<path d="M767 320.1l2-2 2 2M767 323.5l2 2 2-2" stroke="#666" stroke-width=".8"/>
<path d="M767 204.5l2 2 2-2" stroke="#666" stroke-width=".8"/>
<path d="M767 352l2 2 2-2" stroke="#666" stroke-width=".8"/>
<path d="M717.500 386l20.500-12" stroke="#e0433c" stroke-width=".8"/><path d="M741 379l2 2 2-2" stroke="#666" stroke-width=".8"/>
<path d="M873.500 199v7.500M871.500 199h3.500" stroke="#fff" stroke-width="1"/><path d="M872 199a2.100 2.100 0 0 0 0 4.200z" fill="#fff"/>
<g stroke="#c4c4c4" stroke-width=".9"><rect x="867.500" y="225.500" width="10.500" height="8"/><path d="M867.500 228h10.500M867.500 230.700h10.500M871 228v5.500M874.500 228v5.500"/>
<rect x="868" y="252" width="10" height="8.500"/><path d="M868 259l3-3 2 2 2.500-3 2.500 3"/><circle cx="871" cy="254.500" r=".8"/>
<rect x="868.500" y="279" width="9" height="9.500"/><path d="M868.500 280.500h9M868.500 287h9" stroke-width="1.400"/>
<rect x="868" y="304.500" width="6" height="6"/><circle cx="875" cy="311.500" r="3.300" fill="#f1f1f1"/>
<rect x="867.500" y="337" width="2.300" height="3.500"/><rect x="871.500" y="334" width="2.300" height="6.500"/><rect x="875.500" y="331.500" width="2.300" height="9"/>
<path d="M868.500 357.500h7M872 357.500v7M869 366.500h9M875.500 361.500a1.600 1.600 0 1 1 0 3.200v-4"/>
<rect x="867.500" y="384.500" width="11" height="8"/><path d="M867.500 384.500l5.500 4.500 5.500-4.500"/></g>
<!--ANNOT-->
<g stroke="#8fb0dc" stroke-width=".7" fill="none">
<path d="M249 495c14-8 32-10 44-2 11 7 22 16 30 21"/><path d="M319.500 511.500l3.800 2.600-1.200-4.300"/>
<path d="M285 555c5-12 18-18 36-21"/><path d="M317 532.300l4.200 1.600-3.300 2.800"/>
<path d="M551 511.500c-14 20-50 34-86 39-40 5-75 8-96 8"/><path d="M372.500 556.500l-3.800 2.500 4 2"/>
<path d="M551.500 511.500c-6 22-30 38-64.500 44.500"/><path d="M490.500 553l-3.800 3 4.500 1.300"/>
</g>
<circle cx="475.300" cy="512.300" r="2.600" stroke="#b0b4ba" stroke-width=".7"/><path d="M477.200 514.200l2 2" stroke="#b0b4ba" stroke-width=".7"/>
<path d="M448.800 608l4.500 4 4.500-4" stroke="#21406f" stroke-width="1.200" stroke-linecap="round" stroke-linejoin="round" fill="none"/>

</svg>
</div>
</div>

<!-- BOTTOM -->
<div class="abs" id="bot" style="left:0;top:619px;width:907px;height:168px;background:#f8f9fa">
<style>
.tile{position:absolute;top:15.800px;height:137.800px;border-radius:3px;overflow:hidden}
.npill{position:absolute;height:21px;border-radius:10.500px;background:rgba(250,251,252,.86)}
.ntx{position:absolute;white-space:nowrap;line-height:1;font-size:12.300px;-webkit-text-stroke:.45px #2d4469;color:#2d4469;top:131.500px}
</style>
<!-- tile 1 -->
<div class="tile" style="left:35.500px;width:271px;background:#dcdcdf">
 <div class="abs" style="left:0;top:0;width:271px;height:139px;background:radial-gradient(ellipse 85px 48px at 62px 62px,#c1c1c6 0%,rgba(193,193,198,0) 100%),radial-gradient(ellipse 80px 45px at 150px 58px,#cbcbcf 0%,rgba(203,203,207,0) 100%),linear-gradient(90deg,#dddde0 0%,#d8d8db 40%,#e0e0e3 80%,#e4e4e7 100%)"></div>
 <div class="abs" style="left:0;top:0;width:271px;height:139px;box-shadow:inset 0 0 8px 2px rgba(236,236,239,.8)"></div>
 <svg class="abs" style="left:98.300px;top:25.700px" width="74.500" height="74.500" viewBox="0 0 38.5 38.5"><clipPath id="ct1"><circle cx="19.250" cy="19.250" r="19.250"/></clipPath><filter id="ft1"><feGaussianBlur stdDeviation=".45"/></filter><g clip-path="url(#ct1)"><g filter="url(#ft1)">
<rect x="-2" y="-2" width="43" height="43" fill="#0b0c10"/>
<ellipse cx="7.500" cy="10.500" rx="7.500" ry="5" fill="#2c5bb0"/><ellipse cx="5.500" cy="14.500" rx="7" ry="2.600" fill="#93a9cf"/><ellipse cx="10" cy="17.500" rx="6" ry="2.500" fill="#5f7fb5"/>
<ellipse cx="35" cy="19.500" rx="4.500" ry="8" fill="#4f76b4"/><ellipse cx="33" cy="14" rx="5" ry="2.500" fill="#7f97c0"/>
<circle cx="26.600" cy="13.900" r="2.100" fill="#fff"/><circle cx="31.400" cy="13.900" r="2.100" fill="#fff"/>
<path d="M2.500 41c-1-7 1-12 5-15.500 3-2.500 6-4.500 8.500-7.500h7.500c3 2 6 3 8.500 5 3 3 4 7 3 12l-3 6z" fill="#e2e5e9"/>
<path d="M15.600 14h8v4.500c-1.500 2.600-6.500 2.600-8 0z" fill="#b58a75"/>
<ellipse cx="19.600" cy="9.400" rx="6" ry="7.900" fill="#c9a08a"/><ellipse cx="26" cy="10" rx="1" ry="2" fill="#c09580"/>
<path d="M13.200 7.500c-.5-5 2.500-7.500 6.400-7.500s7.300 2 6.400 7.500c-2.500-3-10-3.200-12.800 0z" fill="#30221c"/>
<path d="M14.500 11.500c.7 4.800 2.900 6.500 5.100 6.500s4.400-1.700 5.100-6.500c-1.700 2.600-8.500 2.600-10.200 0z" fill="#5e4034" opacity=".85"/>
</g></g></svg>
 <div class="npill" style="left:72.400px;top:112.600px;width:125.500px;height:20px"></div>
 <div class="ntx" style="left:80px;top:116.600px;font-size:12px">Муромов Владимир</div>
</div>
<!-- tile 2 -->
<div class="tile" style="left:333px;top:15px;width:242px;height:139px;border:2px solid #3b72d6;border-radius:4px;background:#6d695f">
<svg class="abs" style="left:0;top:0" width="238" height="135" viewBox="0 0 239 137" preserveAspectRatio="none">
<filter id="fv" x="-10%" y="-10%" width="120%" height="120%"><feGaussianBlur stdDeviation="2.600"/></filter>
<filter id="fv2" x="-10%" y="-10%" width="120%" height="120%"><feGaussianBlur stdDeviation="1.100"/></filter>
<filter id="fv3" x="-20%" y="-20%" width="140%" height="140%"><feGaussianBlur stdDeviation="4.500"/></filter>
<linearGradient id="gbg" x1="0" x2="1" y1="0" y2="0"><stop offset="0" stop-color="#2a292b"/><stop offset=".12" stop-color="#343233"/><stop offset=".2" stop-color="#45423f"/><stop offset=".24" stop-color="#625f58"/><stop offset=".27" stop-color="#8f8b80"/><stop offset=".66" stop-color="#8d897d"/><stop offset=".8" stop-color="#827e73"/><stop offset=".93" stop-color="#66625a"/><stop offset="1" stop-color="#4f4c45"/></linearGradient>
<rect width="239" height="137" fill="url(#gbg)"/>
<g filter="url(#fv3)">
 <ellipse cx="16" cy="40" rx="18" ry="34" fill="#27272a"/>
 <ellipse cx="215" cy="30" rx="22" ry="30" fill="#5b574f"/>
 <ellipse cx="200" cy="60" rx="24" ry="34" fill="#77736a"/>
</g>
<g filter="url(#fv)">
 <rect x="60" y="-5" width="8" height="120" fill="#b3afa4"/><rect x="69" y="-5" width="5" height="120" fill="#8f8b81"/><rect x="75" y="-5" width="6" height="120" fill="#aaa69b"/><rect x="83" y="-5" width="7" height="60" fill="#7a766d"/>
 <rect x="108" y="-5" width="14" height="30" fill="#a39e91"/><rect x="126" y="-5" width="8" height="40" fill="#78746b"/><rect x="138" y="-5" width="10" height="50" fill="#9d988b"/><rect x="152" y="-5" width="7" height="90" fill="#6c685f"/><rect x="160" y="-5" width="12" height="40" fill="#969185"/><rect x="176" y="-5" width="6" height="40" fill="#6f6b62"/>
 <path d="M186 70c0-34 10-46 24-46s22 14 22 46" stroke="#57534b" stroke-width="5" fill="none"/>
 <ellipse cx="173" cy="54" rx="7" ry="11" fill="#cfcfcb"/><ellipse cx="181" cy="40" rx="5" ry="7" fill="#b9b7b0"/><ellipse cx="196" cy="51" rx="5.500" ry="9" fill="#c6c5c0"/>
 <path d="M163 70c6-8 20-8 26 0 4 8 2 22-4 30-8 4-18 2-22-6-3-8-3-18 0-24z" fill="#3f5a2a"/><ellipse cx="192" cy="84" rx="5" ry="10" fill="#4a6532"/>
 <path d="M196 96c2 10 4 20 3 30" stroke="#6f8a4a" stroke-width="3" fill="none"/>
 <circle cx="209.500" cy="77.500" r="15.500" fill="#ebebe8"/><circle cx="198" cy="95" r="6.500" fill="#c9c9c6"/><circle cx="214" cy="105" r="6" fill="#c2c2bf"/>
 <rect x="-5" y="114" width="70" height="30" fill="#c3c1ba"/><rect x="183" y="114" width="62" height="30" fill="#c9c7bf"/><rect x="8" y="124" width="32" height="4" fill="#a9a7a0"/>
 <ellipse cx="35.500" cy="103" rx="12" ry="10" fill="#c2c9dd"/>
 <rect x="164" y="105" width="18" height="16" rx="2" fill="#b8cce6"/>
</g>
<g filter="url(#fv2)">
 <path d="M75 137c-3-30-1-58 3-82 4-28 18-45 40-45s34 16 38 42c4 26 8 56 9 85z" fill="#3d2820"/>
 <path d="M140 30c10 10 14 40 16 107h-14z" fill="#553a2e" opacity=".7"/>
 <path d="M46 137c2-14 16-25 34-29l38-3 36 3c18 4 28 15 32 29z" fill="#e6e6e8"/>
 <path d="M102 92h36v17c-8 11-28 11-36 0z" fill="#c39379"/>
 <path d="M90 56c0-20 10-30 28-30s29 10 29 30c0 24-10 42-29 42s-28-18-28-42z" fill="#d6a890"/>
 <path d="M90 56c0-12 4-22 12-27-3 10-3 22-1 36 2 14 6 24 12 31-14-4-23-20-23-40z" fill="#a87860" opacity=".7"/>
 <path d="M124 30c12 4 20 14 21 30-1 14-5 26-12 33 4-12 5-24 3-36-2-12-6-20-12-27z" fill="#e2b8a2" opacity=".6"/>
 <path d="M88 62c-3-24 8-38 30-38 16 0 28 8 30 32-6-14-14-22-30-24-14 2-26 12-30 30z" fill="#3d2820"/>
 <ellipse cx="103" cy="53.500" rx="5.500" ry="2" fill="#3a2a26"/><ellipse cx="130" cy="53.500" rx="5.500" ry="2" fill="#3a2a26"/>
 <path d="M97 48c3-2.500 9-2.500 12 0M124 48c3-2.500 9-2.500 12 0" stroke="#4a342c" stroke-width="1.300" fill="none"/>
 <path d="M112 69c2 2 7 2 9 0" stroke="#9a6a56" stroke-width="1.800" fill="none"/>
 <path d="M105 79c6 3.500 17 3.500 23-.5" stroke="#a8544a" stroke-width="2.200" fill="none"/>
</g>
</svg>
 <div class="npill" style="left:56.500px;top:111px;width:124.500px;height:22px;border-radius:11px;background:rgba(224,224,224,.9)"></div>
 <div class="ntx" style="left:66px;top:116.300px;font-size:11.700px;letter-spacing:-.3px;color:#21406f;-webkit-text-stroke:.45px #21406f">Василевская Мария</div>
</div>
<!-- tile 3 -->
<div class="tile" style="left:600.500px;width:272px;background:radial-gradient(ellipse 175px 92px at 50% 50%,#a4b6d1 0%,#aabbd4 45%,#c4cfdf 78%,#dae1eb 100%)">
 <div class="abs" style="left:0;top:0;width:272px;height:139px;box-shadow:inset 0 0 7px 2px rgba(228,233,240,.75)"></div>
 <div class="abs" style="left:98.300px;top:26px;width:75.500px;height:75.500px;border-radius:50%;background:#4a6fa1"></div>
 <div class="abs" style="left:98.300px;width:75.500px;text-align:center;top:47px;font-size:33.500px;line-height:1;color:#fff">НА</div>
 <div class="npill" style="left:76.500px;top:112px;width:118.500px;height:21.200px"></div>
 <div class="ntx" style="left:84.500px;top:116.800px;font-size:11.900px">Нечаев Александр</div>
</div>
</div>

<!-- EXTRAS -->
<div class="abs" id="lstrip" style="left:1px;top:0;width:6px;height:787px;background:linear-gradient(90deg,#f7f8f9 0,#f4f5f6 70%,rgba(240,241,243,0) 100%)"></div>
<div class="abs" id="edge" style="left:0;top:11px;width:1px;height:765px;background:linear-gradient(#6e7074 0,#55575b 50%,#3f4044 100%)"></div>
<div class="abs" id="hnd" style="left:885.700px;top:394.500px;width:21.300px;height:64.500px;border-radius:20px 0 0 20px;background:#f8f9fa"></div>
<svg class="abs" style="left:891px;top:419.300px" width="12" height="14" viewBox="0 0 12 14" fill="none"><path d="M3.700 2.200l5 4.800-5 4.800" stroke="#21406f" stroke-width="1.500" stroke-linecap="round" stroke-linejoin="round"/></svg>

<!-- RIGHT PANEL -->
<div class="abs" id="rp">
 <div class="abs" id="rph"></div>
 <div class="t" style="left:108px;top:21px;font-size:14.5px;font-weight:bold">Участники совещания</div>
 <div class="sec" style="top:53px;height:97px"></div>
 <div class="t" style="left:16.300px;top:71px;font-size:15.300px;color:#8a8c90">7 участников</div>
 <div class="abs" style="left:17px;top:97px;width:343px;height:35px;border-radius:4px;background:#e9eaec"></div>
 <div class="t" style="left:28px;top:108px;font-size:14.5px;color:#8a8f96">Поиск</div>

 <div class="sec" style="top:161px;height:178px"></div>
 <div class="t sh" style="top:180.5px">Администраторы</div>
 <div class="t nm" style="top:232px">(я) Василевская Мария</div>
 <div class="t nm" style="top:292.5px">Муромов Владимир</div>

 <div class="sec" style="top:350px;height:177.300px"></div>
 <div class="t sh" style="top:370px">Докладчики</div>
 <div class="t nm" style="top:421px">Кормишина Валерия</div>
 <div class="t nm" style="top:481px">Нечаев Александр</div>

 <div class="sec" style="top:538.200px;height:235px"></div>
 <div class="t sh" style="top:558px">Подключились (внутренние)</div>
 <div class="t nm" style="top:609px">Свиридов Георгий</div>
 <div class="t nm" style="top:668px">Ломашева Мария</div>
 <div class="t nm" style="top:728px">Дмитриева Светлана</div>
<!--RPGEN-->
<div class="av" style="top:220.8px;background:#d5375f"><div class="t" style="left:0;width:38.500px;text-align:center;top:11.2px;font-size:17px;color:#fff">ВМ</div></div>
<div class="abs" style="left:43.6px;top:247.2px;width:10.800px;height:10.800px;border-radius:50%;background:#e8365a;border:1.600px solid #fff"></div>
<svg class="abs" style="left:16.800px;top:280.6px" width="38.500" height="38.500" viewBox="0 0 38.5 38.5"><clipPath id="c2"><circle cx="19.250" cy="19.250" r="19.250"/></clipPath><filter id="f2"><feGaussianBlur stdDeviation=".7"/></filter><g clip-path="url(#c2)"><g filter="url(#f2)"><rect x="-2" y="-2" width="43" height="43" fill="#0b0c10"/>
<ellipse cx="7.500" cy="10.500" rx="7.500" ry="5" fill="#2c5bb0"/><ellipse cx="5.500" cy="14.500" rx="7" ry="2.600" fill="#93a9cf"/><ellipse cx="10" cy="17.500" rx="6" ry="2.500" fill="#5f7fb5"/>
<ellipse cx="35" cy="19.500" rx="4.500" ry="8" fill="#4f76b4"/><ellipse cx="33" cy="14" rx="5" ry="2.500" fill="#7f97c0"/>
<circle cx="26.600" cy="13.900" r="2.100" fill="#fff"/><circle cx="31.400" cy="13.900" r="2.100" fill="#fff"/>
<path d="M2.500 41c-1-7 1-12 5-15.500 3-2.500 6-4.500 8.500-7.500h7.500c3 2 6 3 8.500 5 3 3 4 7 3 12l-3 6z" fill="#e2e5e9"/>
<path d="M15.600 14h8v4.500c-1.500 2.600-6.500 2.600-8 0z" fill="#b58a75"/>
<ellipse cx="19.600" cy="9.400" rx="6" ry="7.900" fill="#c9a08a"/><ellipse cx="26" cy="10" rx="1" ry="2" fill="#c09580"/>
<path d="M13.200 7.500c-.5-5 2.500-7.500 6.400-7.500s7.300 2 6.400 7.500c-2.500-3-10-3.200-12.800 0z" fill="#30221c"/>
<path d="M14.500 11.500c.7 4.800 2.900 6.500 5.100 6.500s4.400-1.700 5.100-6.500c-1.700 2.600-8.500 2.600-10.200 0z" fill="#5e4034" opacity=".85"/></g></g></svg>
<div class="abs" style="left:43.6px;top:306.6px;width:10.800px;height:10.800px;border-radius:50%;background:#f0a46c;border:1.600px solid #fff"></div>
<svg class="abs" style="left:16.800px;top:408.8px" width="38.500" height="38.500" viewBox="0 0 38.5 38.5"><clipPath id="c3"><circle cx="19.250" cy="19.250" r="19.250"/></clipPath><filter id="f3"><feGaussianBlur stdDeviation=".7"/></filter><g clip-path="url(#c3)"><g filter="url(#f3)"><rect x="-2" y="-2" width="43" height="43" fill="#98a1b2"/>
<path d="M3 40c0-12 3-19 9-21l5-2 6 2c5 2 6 9 6 21z" fill="#dcdddf"/>
<ellipse cx="18" cy="8" rx="4.300" ry="5.800" fill="#c9a28f"/><path d="M12.500 12c-1-6 1-11 6-11 4 0 5 2 4.500 4-3-1-6 0-7 3l-1 5z" fill="#4a3831"/><rect x="15.500" y="12" width="5" height="5" fill="#c9a28f"/>
<path d="M3 40l4-16 3 1-2 15z" fill="#8a8d96"/></g></g></svg>
<div class="av" style="top:468.6px;background:#4a6fa1"><div class="t" style="left:0;width:38.500px;text-align:center;top:11.2px;font-size:17px;color:#fff">НА</div></div>
<div class="abs" style="left:43.6px;top:494.7px;width:10.800px;height:10.800px;border-radius:50%;background:#f0a46c;border:1.600px solid #fff"></div>
<svg class="abs" style="left:16.800px;top:597.3px" width="38.500" height="38.500" viewBox="0 0 38.5 38.5"><clipPath id="c5"><circle cx="19.250" cy="19.250" r="19.250"/></clipPath><filter id="f5"><feGaussianBlur stdDeviation=".7"/></filter><g clip-path="url(#c5)"><g filter="url(#f5)"><rect x="-2" y="-2" width="43" height="43" fill="#f2f3f5"/>
<path d="M-2 -2h43v10c-6-3-34-3-43 0z" fill="#3d3d3f"/>
<rect x="-2" y="17" width="12" height="24" fill="#9eb2cf"/><rect x="29" y="17" width="12" height="20" fill="#a9b9d2"/><ellipse cx="7" cy="19" rx="4" ry="4" fill="#3c5a3a"/><rect x="3" y="26" width="8" height="14" fill="#2f4468"/>
<path d="M9 41v-18c0-4 3-6 6-6.500l5-1 5 1c3 .5 6 2.500 6 6.500v18z" fill="#b7cbea"/>
<ellipse cx="20" cy="9.500" rx="3.800" ry="5.200" fill="#c9987f"/><path d="M16 7c0-3 2-4.500 4-4.500s4 1.500 4 4.500c-2-1.500-6-1.500-8 0z" fill="#3a2a22"/><rect x="18" y="13" width="4" height="3.500" fill="#c9987f"/>
<path d="M12 28c4-1.500 12-1.500 17 0v3c-5 1.500-13 1.500-17 0z" fill="#d0a48c"/><rect x="8" y="33" width="24" height="8" fill="#2a3140" opacity=".55"/><rect x="13" y="33" width="15" height="8" fill="#b7cbea"/></g></g></svg>
<div class="av" style="top:657.2px;background:#e8765a"><div class="t" style="left:0;width:38.500px;text-align:center;top:11.2px;font-size:17px;color:#fff">ЛМ</div></div>
<svg class="abs" style="left:16.800px;top:717.1px" width="38.500" height="38.500" viewBox="0 0 38.5 38.5"><clipPath id="c7"><circle cx="19.250" cy="19.250" r="19.250"/></clipPath><filter id="f7"><feGaussianBlur stdDeviation=".7"/></filter><g clip-path="url(#c7)"><g filter="url(#f7)"><rect x="-2" y="-2" width="43" height="43" fill="#c9cacc"/>
<rect x="23" y="2" width="5" height="26" fill="#4a4b50"/><rect x="21" y="4" width="8" height="2" fill="#f4f4f4"/><rect x="29" y="4" width="10" height="22" fill="#e6e7e9"/><path d="M27 22l12-4v9l-12 2z" fill="#2a2526"/>
<path d="M2 41c0-12 3-19 9-22l6-2 6 3c4 2 8 5 10 8l-3 13z" fill="#18171a"/>
<ellipse cx="14" cy="11.500" rx="4.600" ry="6" fill="#c39b86"/><path d="M7.500 18c-1-8 1-15 7-15 4 0 5 2 4.500 3.500-3-.5-6 1-6.500 4l-1.500 7.500z" fill="#33261f"/></g></g></svg>
<div class="abs" style="left:43.6px;top:743.2px;width:10.800px;height:10.800px;border-radius:50%;background:#6e9c5c;border:1.600px solid #fff"></div>
<svg class="abs" style="left:316.0px;top:229.0px" width="22" height="22" viewBox="0 0 22 22" fill="none"><circle cx="11" cy="11" r="10.300" fill="#2b589e"/><path d="M4.7 7.700l3.100 2.700 3.200-4.300 3.200 4.300 3.100-2.700-1.200 5.800h-10.200z" fill="#fff"/><rect x="5.900" y="14.600" width="10.200" height="1.500" fill="#fff"/></svg>
<svg class="abs" style="left:260.0px;top:288.8px" width="22" height="22" viewBox="0 0 22 22" fill="none"><circle cx="11" cy="11" r="10.300" fill="#2b589e"/><path d="M4.7 7.700l3.100 2.700 3.200-4.300 3.200 4.300 3.100-2.700-1.200 5.800h-10.200z" fill="#fff"/><rect x="5.900" y="14.600" width="10.200" height="1.500" fill="#fff"/></svg>
<svg class="abs" style="left:288.0px;top:288.8px" width="22" height="22" viewBox="0 0 22 22" fill="none"><circle cx="11" cy="11" r="10.300" fill="#21406f"/><rect x="9.300" y="5.600" width="3.400" height="6.800" rx="1.700" fill="#fff"/><path d="M7.500 10.800a3.500 3.500 0 0 0 7 0M11 14.400v2" stroke="#fff" stroke-width="1" stroke-linecap="round"/></svg>
<svg class="abs" style="left:316.0px;top:288.8px" width="22" height="22" viewBox="0 0 22 22" fill="none"><circle cx="11" cy="11" r="10.300" fill="#b9bcc8"/><rect x="6.300" y="8.300" width="6.800" height="5.400" rx="1" stroke="#eef0f4" stroke-width=".9"/><path d="M13.100 10.400l2.400-1.500v4.200l-2.400-1.500M5.800 16l10.600-10" stroke="#eef0f4" stroke-width=".9" stroke-linecap="round" stroke-linejoin="round"/></svg>
<svg class="abs" style="left:260.0px;top:417.0px" width="22" height="22" viewBox="0 0 22 22" fill="none"><circle cx="11" cy="11" r="10.300" fill="#2b589e"/><path d="M9.200 6.600c0-1 .7-1.600 1.700-1.600h3.200c1.300 0 2.100.9 2.100 2.100v5.200c0 1.200-.5 2-1.400 2.400v1.800h-4.200v-1.600h-1.200c-.7 0-1-.4-1-1v-1.600l-1-.5c-.3-.2-.3-.5-.1-.8l1.100-1.600z" fill="#fff"/><path d="M3.600 9l2 .7M3.400 11.200h2M3.600 13.400l2-.7" stroke="#fff" stroke-width=".9" stroke-linecap="round"/></svg>
<svg class="abs" style="left:288.0px;top:417.0px" width="22" height="22" viewBox="0 0 22 22" fill="none"><circle cx="11" cy="11" r="10.300" fill="#b9bcc8"/><rect x="9.600" y="6.300" width="2.800" height="5.800" rx="1.400" stroke="#eef0f4" stroke-width=".9"/><path d="M7.900 10.800a3.100 3.100 0 0 0 6.200 0M11 14v1.800M6.300 15.800l9.600-9.800" stroke="#eef0f4" stroke-width=".9" stroke-linecap="round"/></svg>
<svg class="abs" style="left:316.0px;top:417.0px" width="22" height="22" viewBox="0 0 22 22" fill="none"><circle cx="11" cy="11" r="10.300" fill="#b9bcc8"/><rect x="6.300" y="8.300" width="6.800" height="5.400" rx="1" stroke="#eef0f4" stroke-width=".9"/><path d="M13.100 10.400l2.400-1.500v4.200l-2.400-1.500M5.800 16l10.600-10" stroke="#eef0f4" stroke-width=".9" stroke-linecap="round" stroke-linejoin="round"/></svg>
<svg class="abs" style="left:260.0px;top:476.8px" width="22" height="22" viewBox="0 0 22 22" fill="none"><circle cx="11" cy="11" r="10.300" fill="#2b589e"/><path d="M9.200 6.600c0-1 .7-1.600 1.700-1.600h3.200c1.300 0 2.100.9 2.100 2.100v5.200c0 1.200-.5 2-1.400 2.400v1.800h-4.200v-1.600h-1.200c-.7 0-1-.4-1-1v-1.600l-1-.5c-.3-.2-.3-.5-.1-.8l1.100-1.600z" fill="#fff"/><path d="M3.600 9l2 .7M3.400 11.200h2M3.600 13.400l2-.7" stroke="#fff" stroke-width=".9" stroke-linecap="round"/></svg>
<svg class="abs" style="left:288.0px;top:476.8px" width="22" height="22" viewBox="0 0 22 22" fill="none"><circle cx="11" cy="11" r="10.300" fill="#21406f"/><rect x="9.300" y="5.600" width="3.400" height="6.800" rx="1.700" fill="#fff"/><path d="M7.500 10.800a3.500 3.500 0 0 0 7 0M11 14.400v2" stroke="#fff" stroke-width="1" stroke-linecap="round"/></svg>
<svg class="abs" style="left:316.0px;top:476.8px" width="22" height="22" viewBox="0 0 22 22" fill="none"><circle cx="11" cy="11" r="10.300" fill="#b9bcc8"/><rect x="6.300" y="8.300" width="6.800" height="5.400" rx="1" stroke="#eef0f4" stroke-width=".9"/><path d="M13.100 10.400l2.400-1.500v4.200l-2.400-1.500M5.800 16l10.600-10" stroke="#eef0f4" stroke-width=".9" stroke-linecap="round" stroke-linejoin="round"/></svg>
<svg class="abs" style="left:288.0px;top:605.5px" width="22" height="22" viewBox="0 0 22 22" fill="none"><circle cx="11" cy="11" r="10.300" fill="#b9bcc8"/><rect x="9.600" y="6.300" width="2.800" height="5.800" rx="1.400" stroke="#eef0f4" stroke-width=".9"/><path d="M7.900 10.800a3.100 3.100 0 0 0 6.200 0M11 14v1.800M6.300 15.800l9.600-9.800" stroke="#eef0f4" stroke-width=".9" stroke-linecap="round"/></svg>
<svg class="abs" style="left:316.0px;top:605.5px" width="22" height="22" viewBox="0 0 22 22" fill="none"><circle cx="11" cy="11" r="10.300" fill="#b9bcc8"/><rect x="6.300" y="8.300" width="6.800" height="5.400" rx="1" stroke="#eef0f4" stroke-width=".9"/><path d="M13.100 10.400l2.400-1.500v4.200l-2.400-1.500M5.800 16l10.600-10" stroke="#eef0f4" stroke-width=".9" stroke-linecap="round" stroke-linejoin="round"/></svg>
<svg class="abs" style="left:288.0px;top:665.4px" width="22" height="22" viewBox="0 0 22 22" fill="none"><circle cx="11" cy="11" r="10.300" fill="#b9bcc8"/><rect x="9.600" y="6.300" width="2.800" height="5.800" rx="1.400" stroke="#eef0f4" stroke-width=".9"/><path d="M7.900 10.800a3.100 3.100 0 0 0 6.200 0M11 14v1.800M6.300 15.800l9.600-9.800" stroke="#eef0f4" stroke-width=".9" stroke-linecap="round"/></svg>
<svg class="abs" style="left:316.0px;top:665.4px" width="22" height="22" viewBox="0 0 22 22" fill="none"><circle cx="11" cy="11" r="10.300" fill="#b9bcc8"/><rect x="6.300" y="8.300" width="6.800" height="5.400" rx="1" stroke="#eef0f4" stroke-width=".9"/><path d="M13.100 10.400l2.400-1.500v4.200l-2.400-1.500M5.800 16l10.600-10" stroke="#eef0f4" stroke-width=".9" stroke-linecap="round" stroke-linejoin="round"/></svg>
<svg class="abs" style="left:288.0px;top:725.3px" width="22" height="22" viewBox="0 0 22 22" fill="none"><circle cx="11" cy="11" r="10.300" fill="#b9bcc8"/><rect x="9.600" y="6.300" width="2.800" height="5.800" rx="1.400" stroke="#eef0f4" stroke-width=".9"/><path d="M7.900 10.800a3.100 3.100 0 0 0 6.200 0M11 14v1.800M6.300 15.800l9.600-9.800" stroke="#eef0f4" stroke-width=".9" stroke-linecap="round"/></svg>
<svg class="abs" style="left:316.0px;top:725.3px" width="22" height="22" viewBox="0 0 22 22" fill="none"><circle cx="11" cy="11" r="10.300" fill="#b9bcc8"/><rect x="6.300" y="8.300" width="6.800" height="5.400" rx="1" stroke="#eef0f4" stroke-width=".9"/><path d="M13.100 10.400l2.400-1.500v4.200l-2.400-1.500M5.800 16l10.600-10" stroke="#eef0f4" stroke-width=".9" stroke-linecap="round" stroke-linejoin="round"/></svg>
<svg class="abs" style="left:333px;top:104px" width="22" height="22" viewBox="0 0 22 22" fill="none"><circle cx="9.600" cy="10.500" r="6.300" stroke="#9a9ea5" stroke-width="1.200"/><path d="M14.300 15.200l3.800 3.600" stroke="#9a9ea5" stroke-width="1.300" stroke-linecap="round"/></svg>
<svg class="abs" style="left:335px;top:24px" width="24" height="8" viewBox="0 0 24 8"><circle cx="3.600" cy="4" r="2.600" fill="#2d4469"/><circle cx="11" cy="4" r="2.600" fill="#2d4469"/><circle cx="18.400" cy="4" r="2.600" fill="#2d4469"/></svg>
<!--/RPGEN-->
</div>

</div>
</body>
</html>
